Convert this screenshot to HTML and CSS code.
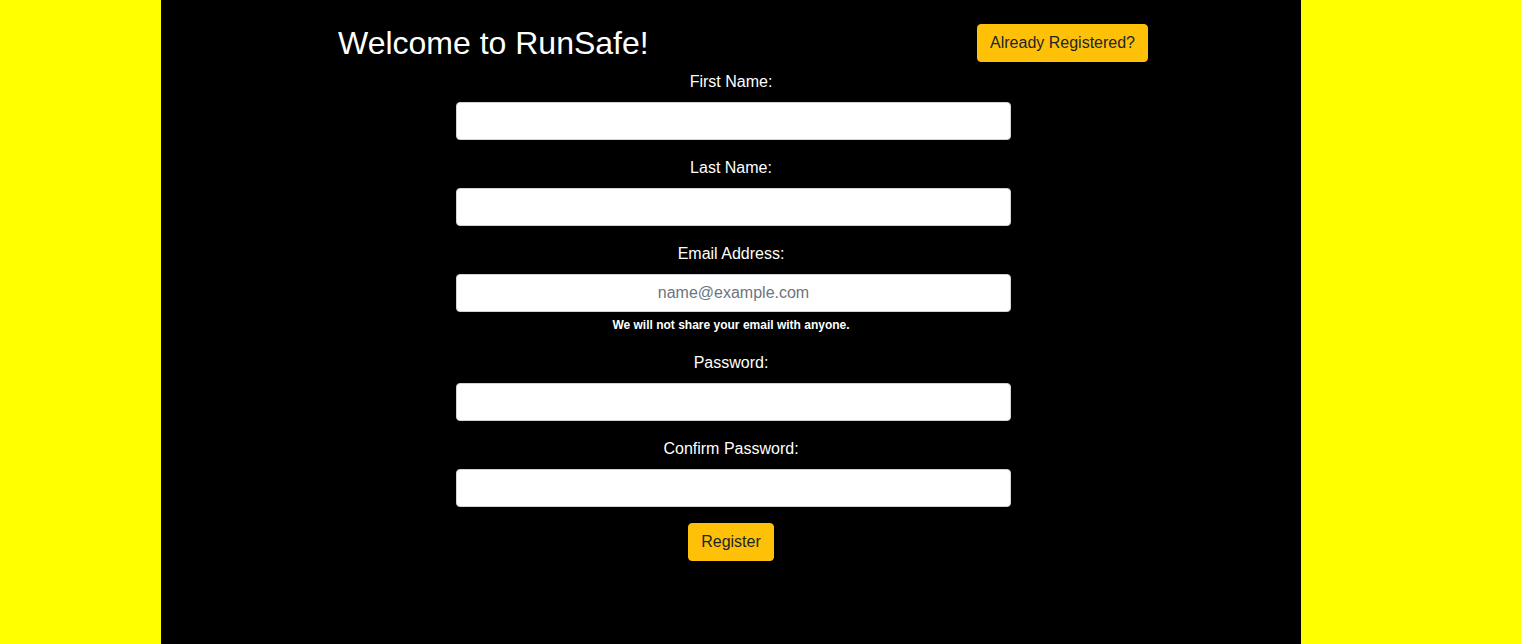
FILE: index.html
```html
<!DOCTYPE html>
<html lang="en">
<head>
<meta charset="utf-8">
<title>RunSafe - Register</title>
<link rel="stylesheet" href="styles.css">
</head>
<body>
<div class="page">
  <header class="header">
    <h1 class="title">Welcome to RunSafe!</h1>
    <button class="btn" type="button">Already Registered?</button>
  </header>
  <form class="form">
    <div class="group">
      <label class="label" for="fn">First Name:</label>
      <input class="input" id="fn" type="text">
    </div>
    <div class="group">
      <label class="label" for="ln">Last Name:</label>
      <input class="input" id="ln" type="text">
    </div>
    <div class="group">
      <label class="label" for="em">Email Address:</label>
      <input class="input" id="em" type="email" placeholder="name@example.com">
      <small class="help">We will not share your email with anyone.</small>
    </div>
    <div class="group">
      <label class="label" for="pw">Password:</label>
      <input class="input" id="pw" type="password">
    </div>
    <div class="group">
      <label class="label" for="cpw">Confirm Password:</label>
      <input class="input" id="cpw" type="password">
    </div>
    <button class="btn" type="button">Register</button>
  </form>
</div>
</body>
</html>
```
FILE: styles.css
```css
html, body {
  margin: 0;
  padding: 0;
  height: 100%;
}
body {
  background: #ffff00;
  font-family: "Liberation Sans", Arial, sans-serif;
  font-size: 16px;
  line-height: 1.5;
  color: #ffffff;
}
.page {
  width: 1140px;
  margin-left: 161px;
  min-height: 100%;
  background: #000000;
  box-sizing: border-box;
  padding-top: 24px;
}
.header {
  display: flex;
  justify-content: space-between;
  align-items: center;
  padding: 0 153px 0 177px;
  margin-bottom: 8px;
}
.title {
  margin: 0;
  font-size: 32px;
  font-weight: 400;
  line-height: 38px;
  color: #ffffff;
}
.btn {
  font-family: inherit;
  font-size: 16px;
  line-height: 24px;
  padding: 6px 12px;
  border: 1px solid #ffc107;
  border-radius: 4px;
  background: #ffc107;
  color: #212529;
  cursor: pointer;
}
.form {
  width: 560px;
  margin: 0 auto;
  display: flex;
  flex-direction: column;
  align-items: center;
  text-align: center;
}
.group {
  display: flex;
  flex-direction: column;
  align-items: center;
  width: 100%;
  margin-bottom: 16px;
}
.label {
  margin-bottom: 8px;
}
.input {
  box-sizing: border-box;
  width: 555px;
  height: 38px;
  margin-left: 5px;
  padding: 6px 12px;
  font-family: inherit;
  font-size: 16px;
  text-align: center;
  color: #495057;
  background: #ffffff;
  border: 1px solid #ced4da;
  border-radius: 4px;
}
.input::placeholder {
  color: #6c757d;
}
.help {
  margin-top: 4px;
  font-size: 12px;
  line-height: 19px;
  font-weight: 700;
  color: #ffffff;
}
```
